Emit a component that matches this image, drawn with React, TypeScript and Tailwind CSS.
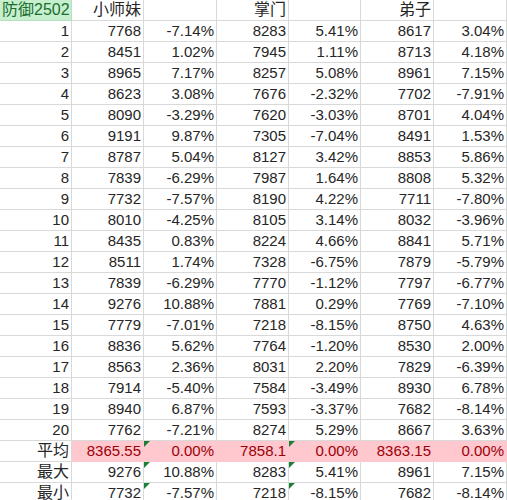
const COLS = ["w-[72px]", "w-[72px]", "w-[73px]", "w-[72px]", "w-[72px]", "w-[73px]", "w-[73px]"];

const DATA: string[][] = [
  ["1", "7768", "-7.14%", "8283", "5.41%", "8617", "3.04%"],
  ["2", "8451", "1.02%", "7945", "1.11%", "8713", "4.18%"],
  ["3", "8965", "7.17%", "8257", "5.08%", "8961", "7.15%"],
  ["4", "8623", "3.08%", "7676", "-2.32%", "7702", "-7.91%"],
  ["5", "8090", "-3.29%", "7620", "-3.03%", "8701", "4.04%"],
  ["6", "9191", "9.87%", "7305", "-7.04%", "8491", "1.53%"],
  ["7", "8787", "5.04%", "8127", "3.42%", "8853", "5.86%"],
  ["8", "7839", "-6.29%", "7987", "1.64%", "8808", "5.32%"],
  ["9", "7732", "-7.57%", "8190", "4.22%", "7711", "-7.80%"],
  ["10", "8010", "-4.25%", "8105", "3.14%", "8032", "-3.96%"],
  ["11", "8435", "0.83%", "8224", "4.66%", "8841", "5.71%"],
  ["12", "8511", "1.74%", "7328", "-6.75%", "7879", "-5.79%"],
  ["13", "7839", "-6.29%", "7770", "-1.12%", "7797", "-6.77%"],
  ["14", "9276", "10.88%", "7881", "0.29%", "7769", "-7.10%"],
  ["15", "7779", "-7.01%", "7218", "-8.15%", "8750", "4.63%"],
  ["16", "8836", "5.62%", "7764", "-1.20%", "8530", "2.00%"],
  ["17", "8563", "2.36%", "8031", "2.20%", "7829", "-6.39%"],
  ["18", "7914", "-5.40%", "7584", "-3.49%", "8930", "6.78%"],
  ["19", "8940", "6.87%", "7593", "-3.37%", "7682", "-8.14%"],
  ["20", "7762", "-7.21%", "8274", "5.29%", "8667", "3.63%"],
];

const STATS: string[][] = [
  ["平均", "8365.55", "0.00%", "7858.1", "0.00%", "8363.15", "0.00%"],
  ["最大", "9276", "10.88%", "8283", "5.41%", "8961", "7.15%"],
  ["最小", "7732", "-7.57%", "7218", "-8.15%", "7682", "-8.14%"],
];

function Cell({
  children,
  col,
  pink,
  flag,
  cjk,
}: {
  children?: React.ReactNode;
  col: number;
  pink?: boolean;
  flag?: boolean;
  cjk?: boolean;
}) {
  return (
    <div
      className={`${COLS[col]} relative h-[21px] shrink-0 border-r border-b pr-[2px] text-right leading-[20px] whitespace-nowrap ${
        cjk ? "text-[16px]" : ""
      } ${pink ? "bg-[#ffc7ce] text-[#9c0006] border-r-[#ffc7ce] border-b-[#ffc7ce]" : "border-[#d9d9d9]"}`}
    >
      {flag && (
        <span className="absolute left-0 top-0 h-0 w-0 border-t-[6px] border-r-[6px] border-t-[#1a7f37] border-r-transparent" />
      )}
      {children}
    </div>
  );
}

export default function App() {
  return (
    <div
      className="h-[500px] w-[507px] overflow-hidden bg-white text-[15px] text-[#262626]"
      style={{ fontFamily: '"Liberation Sans", "Noto Sans CJK SC", sans-serif' }}
    >
      <div className="flex">
        <div className="w-[72px] h-[21px] shrink-0 border-r border-b border-[#b9dfc2] bg-[#c6efce] pl-[2px] text-[16px] leading-[20px] text-[#1b6e30] whitespace-nowrap">
          防御2502
        </div>
        <Cell col={1} cjk>小师妹</Cell>
        <Cell col={2} />
        <Cell col={3} cjk>掌门</Cell>
        <Cell col={4} />
        <Cell col={5} cjk>弟子</Cell>
        <Cell col={6} />
      </div>
      {DATA.map((row) => (
        <div key={row[0]} className="flex">
          {row.map((v, i) => (
            <Cell key={i} col={i}>
              {v}
            </Cell>
          ))}
        </div>
      ))}
      {STATS.map((row, r) => (
        <div key={row[0]} className="flex">
          {row.map((v, i) => (
            <Cell key={i} col={i} cjk={i === 0} pink={r === 0 && i > 0} flag={i === 2 || i === 4}>
              {v}
            </Cell>
          ))}
        </div>
      ))}
    </div>
  );
}
